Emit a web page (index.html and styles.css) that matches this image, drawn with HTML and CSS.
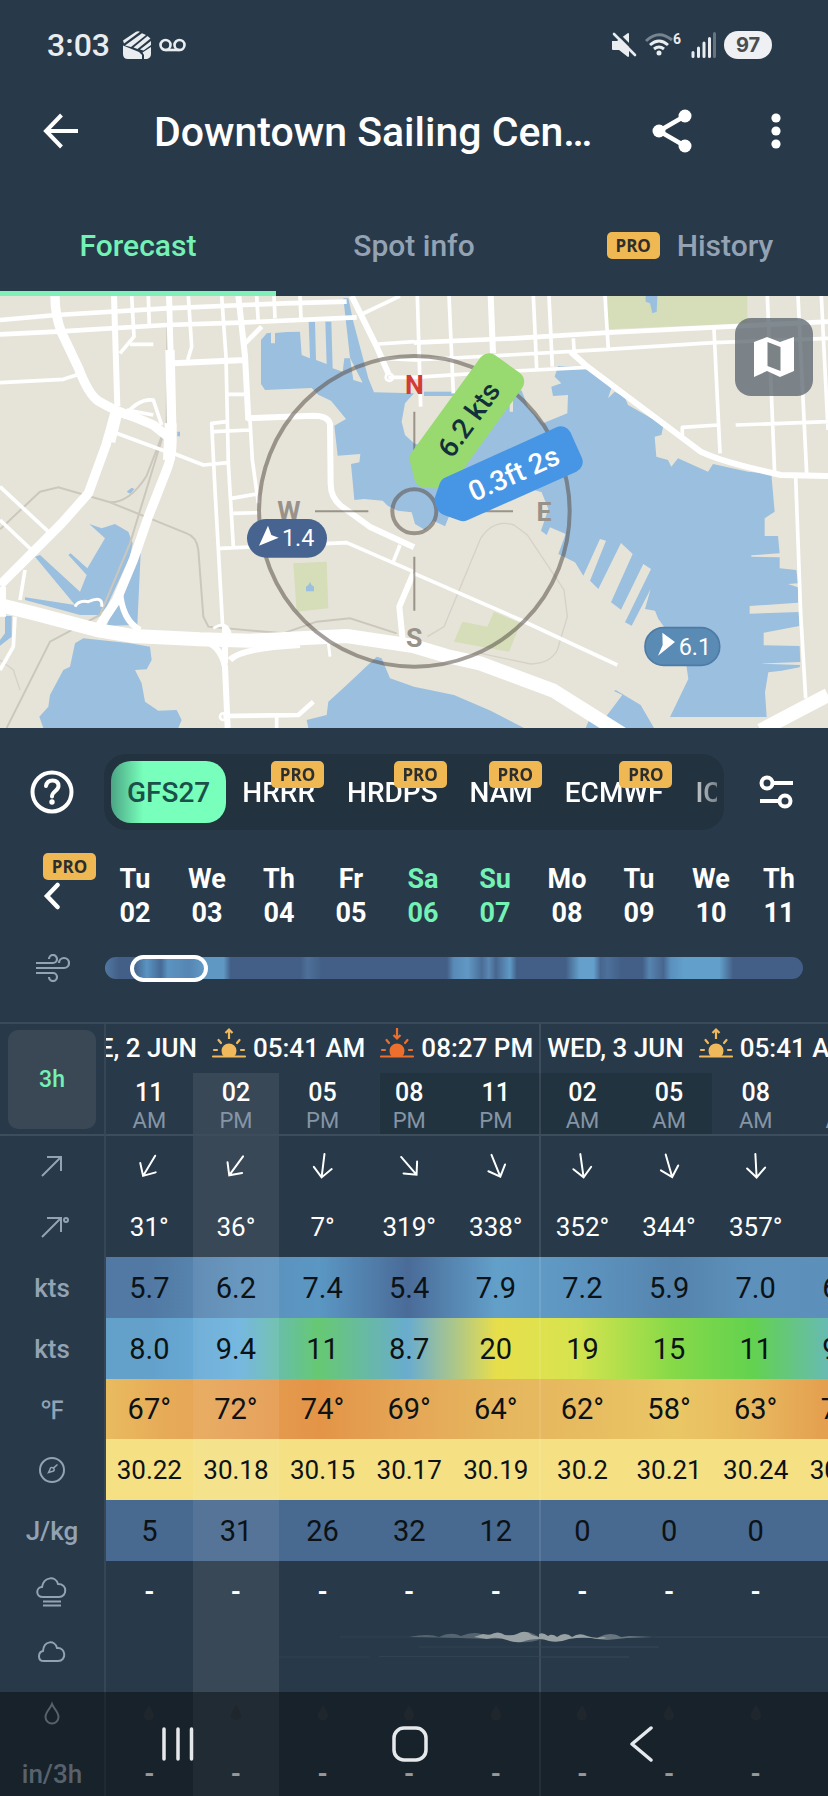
FILE: index.html
```html
<!DOCTYPE html>
<html lang="en">
  <head>
    <meta charset="utf-8">
    <meta name="viewport" content="width=device-width, initial-scale=1">
    <title>Downtown Sailing Center</title>
    <link rel="stylesheet" href="styles.css">
  </head>
  <body>
    <!-- shared icons -->
    <svg class="sprite" aria-hidden="true">
      <symbol id="arrow" viewBox="0 0 28 28">
        <path d="M14 2v23M5 16l9 9.500 9-9.500" fill="none" stroke="currentColor" stroke-width="2" stroke-linecap="round"/>
      </symbol>
      <symbol id="drop" viewBox="0 0 12 16">
        <path d="M6 0C4 4 1 7 1 10.500a5 5 0 0 0 10 0C11 7 8 4 6 0z" fill="currentColor"/>
      </symbol>
      <symbol id="sun" viewBox="0 0 36 34">
        <g fill="none" stroke="currentColor" stroke-width="2.200" stroke-linecap="round">
          <path d="M2 29.500h32M3 23h3M30 23h3M7.500 13l2.500 3M28.500 13l-2.500 3"/>
        </g>
        <path d="M12.500 29a7.500 7.500 0 1 1 11 0z" fill="currentColor"/>
      </symbol>
    </svg>

    <div class="app">
      <header>
        <div class="status">
          <span class="time">3:03</span>
          <svg width="28" height="28" viewBox="0 0 28 28" fill="#e9edf0">
            <path d="M0 9.500L13 .8q2-1 4 0L1 12.500zM2 14.500L19 2.200l4 1.800L8 16zM10.500 16.500L24.500 5l3 2.500L14.500 18zM17 18.500L28 10v4l-7.500 5.500zM0 14.500l16 6.500 3 3v4H5q-5 0-5-5zM19.500 21.500L28 16v7q0 4-4 5h-3v-4z"/>
          </svg>
          <svg width="27" height="14" viewBox="0 0 27 14" fill="none" stroke="#e9edf0" stroke-width="2.600">
            <circle cx="6.500" cy="7" r="5"/><circle cx="20.500" cy="7" r="5"/><path d="M6.500 12h14"/>
          </svg>
          <span class="space"></span>
          <svg width="26" height="26" viewBox="0 0 26 26">
            <path d="M1 9h5l11-8q1 0 1 1v22q0 1-1 1l-9-7H2q-1 0-1-1z" fill="#e9edf0"/>
            <path d="M4 -1l22 22" stroke="#283949" stroke-width="3"/>
            <path d="M3 2l21 21" stroke="#e9edf0" stroke-width="2.600" stroke-linecap="round"/>
          </svg>
          <svg class="wifi" width="38" height="26" viewBox="0 0 38 26" fill="none" stroke="#e9edf0" stroke-width="3">
            <path d="M1 9Q13.500-3 27 8" stroke="#768490"/>
            <path d="M5 13q9-8 18 0M9 17q5-4 10 0"/>
            <circle cx="14" cy="21" r="2.500" fill="#e9edf0" stroke="none"/>
            <text x="28" y="12" font-size="14" font-weight="700" fill="#e9edf0" stroke="none">6</text>
          </svg>
          <svg width="25" height="28" viewBox="0 0 25 28" stroke-width="3" stroke-linecap="round" stroke="#e9edf0">
            <path d="M2 21.500v4M7.500 17v8.500M13 12v13.500M18.500 7.500v18"/>
            <path d="M23.500 2.500v23" stroke="#66747f"/>
          </svg>
          <span class="battery">97</span>
        </div>
        <div class="appbar">
          <button class="back" aria-label="Back">
            <svg width="36" height="36" viewBox="0 0 36 36" fill="none" stroke="#fff" stroke-width="4"><path d="M18.500 2L3 18l15.500 16M3 18h32"/></svg>
          </button>
          <h1>Downtown Sailing Cen…</h1>
          <button aria-label="Share">
            <svg width="40" height="44" viewBox="0 0 40 44"><path d="M33 7L7 22l26 15" fill="none" stroke="#fff" stroke-width="4.500"/><g fill="#fff"><circle cx="33" cy="7" r="6.500"/><circle cx="7" cy="22" r="6.500"/><circle cx="33" cy="37" r="6.500"/></g></svg>
          </button>
          <button aria-label="More">
            <svg width="10" height="36" viewBox="0 0 10 36" fill="#fff"><circle cx="5" cy="5" r="4.600"/><circle cx="5" cy="18" r="4.600"/><circle cx="5" cy="31" r="4.600"/></svg>
          </button>
        </div>
        <nav class="tabs">
          <a class="active" href="#forecast">Forecast</a>
          <a href="#info">Spot info</a>
          <a href="#history"><span class="pro">PRO</span> History</a>
        </nav>
      </header>

      <section class="map">
        <svg class="canvas" viewBox="0 18 2484 1296">
          <rect y="18" width="2484" height="1296" fill="#e6e4d9"/>
          <g fill="#d5ddb9">
            <path d="M880 820l100-5 5 140-95 10zM1822 18h420v82l-420 18zM1387 995l75 15 20-45 80 35-35 85-165-30z"/>
          </g>
          <g fill="#9bbfdf">
            <!-- harbor -->
            <path d="M783 150l17-20 13-2v32h12v-31l35-3 40-1 5 70 25 10-4-110h19l3 115 32 12-4-127h18l4 140 30 10 5-40h17l10 65 28 8-38-75-20-178h15l15 70 45 170 17 42 120 3-27 30-10 55 10 40 27 25 60 20 180-170h15l3 55h10l2-68h17v68h10v-50l25-15 20 50 45 50 73-30 2-55-45 3-5-28 30-10-20-20 10-32 90 4 70 63-10 30 20-20 30 15 10 25 70 40 15-10 23 25-8 35-20 5 5 60 35 10 10 20 20-25 90 40 15-23 105 23 70 7 10 113-30 20v53h40l5 52-85 6v4l85 2v33l50 5 5 40-30 2 30 10v46l-145 10v23l147-5 2 42-107 20v38l108 2 2 48-120 5 119 4-1 7-54 10-40 5-10 60 5 74h-290l55-114-10-70-80-110-10-25-30-5 17-60-57 110-20-10 78-160-23-15-67 137-30-22 65-145-35-33-68 138-25-25 48-120-18-5-50 110-25-40-50-25 22-60-47-20-10 23-17-13 22-65-20-50-50-15-10-15-150 70-65 25-15 37-35-17-25 28-30-18-10-35-42-5-30-15-15-15-55-5-30 3-10-108 25-5 3-25-68 5-10-90 35-20-45-55-38-18-20-20-140 6-12-18z"/>
            <path d="M1272 305h90v13h-90z"/>
            <path d="M268 702l37 13 40-13 40 23 13 35-8 40-70 150-20 25h-60L75 930v-8l150 23L105 800l15-5 120 110 20-50-55-60 7-5 50 45 53-90z"/>
            <path d="M422 790l-10 215-92 2 60-160zM0 1050l15-20V978h20v62L0 1067z"/>
            <path d="M225 1060l25-15 140 15 60 10 5 40-15 28-35 2 20 40 10 55 40 27 55-2 15 30-10 24H130l-12-34 27-30 5-35 40-75 20-10z"/>
            <path d="M1130 1100l15 5 25 60 72 25 120 25 110 47 100 52H925l-5-24 60-15 5-40 55-50z"/>
            <path d="M1847 1200l75 45 40 69h-205l10-24 45-2 55-73-25-12zM1937 18h35l-2 47-13 5-7-30-13-5z"/>
            <path d="M918 890l8-6 4-8 4 8 8 6v14h-24zM380 605l15-12 8 4-12 14zM532 425h8v14h-8z"/>
          </g>
          <g fill="none" stroke="#cbc7bd" stroke-width="6">
            <path d="M503 18l-3 382-110 360-90 215-150 80L20 1314M0 718l120-113 55-13 155 45q60 0 110-80l50-130M330 637l230 93q30 10 35 50l15 200 15 30 225 20 100-35 100-10 140 45"/>
            <path stroke-width="4" stroke="#d5d1c6" d="M1282 1040l50-30 110-265q40-60 100-40l40 30 110 165 10 80-30 100q-20 40-80 42l-150-32M0 1110l40 30 20 60"/>
          </g>
          <g fill="none" stroke="#fff" stroke-linejoin="round">
            <path stroke-width="42" d="M0 945l100 25 200 52 100 16 200 10 150 4 290-14 200 30 100 30 100 22 220 82 210 132M2484 1215l-202 106"/>
            <path stroke-width="28" d="M165 18q0 60 20 110l50 105q30 80 60 100 50 30 105 47l60 25 50 40M510 180l6 270q0 50-16 90l-55 140-45 130-50 120-50 75M345 370l-27 95-53 145-80 90L0 885"/>
            <path stroke-width="36" d="M350 365l-22 90M512 400l-5 110M0 890v90"/>
            <path stroke-width="18" d="M507 18l5 180M715 18l20 180 10 192M520 220l215-10M740 385l200-8q45 0 50 25l2 180q0 40 30 65l90 65 130 60M1240 850l-42 100 10 100M1472 18l7 172M1712 185l50 45 340 255q60 30 240 70l142 3M1055 18l75 152 35 80M342 18l10 330M600 1050q60 10 75 80l8 184M675 1010v110M690 1110q30-35 210-45M360 900q5 90 60 120"/>
            <path stroke-width="14" d="M0 90l170-15 330-20 350-15 190-5M0 133l170-8 330-20 220-7 350-16M735 160l50-50M1242 158l300-13 280-17 662-33M670 1278l225-3 45-40M330 970l70-150"/>
            <path stroke-width="11" d="M395 18l7 122-42 50M390 163h70M445 18l3 92M565 18l10 152-12 40M665 18l13 182 7 320 15 250M770 18l5 82M822 18l3 67M900 18l3 67M750 390l7 120 18 130M680 313h55M680 395l-45 5 10 200 23 410M640 425l110-5M520 490l90 35 75-7M350 430l150 55M695 625l75-13M700 670l75-2M660 775l380-17 200 87M1180 815l20-50M0 278l190-10 40-13M0 590l145 135M0 690l95 90M75 840l-15 90M45 980l-5 90-40 70M830 1280v34M1080 75l120-57M1135 162l107-7M1150 205l92 5 230-12 350-20 320-20 342-13M1165 262h77l300-19 220-11M1252 18l10 332M1347 18l13 292M1600 18l10 217M1647 18l10 212M1815 18l10 160M1720 145l2 35M2302 18l22 532M2394 18l26 532M2464 18l20 402M2142 118l18 372M2154 405l-107 7v26M2207 405l277-10M2387 560l15 410 15 255M1242 850l320 140 290 135M370 385q40-60 90-55l25 75M380 360l80 15"/>
            <path stroke-width="9" d="M225 950q10-20 40-15 45-20 40 15M985 1060l5 40M640 1015q40-25 50 15"/>
          </g>
          <g fill="none" stroke="#fff" stroke-width="8"><circle cx="1168" cy="262" r="11"/><circle cx="670" cy="1280" r="10"/></g>

          <!-- compass -->
          <g fill="none" stroke="#5a5048" stroke-opacity=".55" stroke-width="12">
            <circle cx="1243" cy="664" r="466"/>
            <circle cx="1243" cy="664" r="66"/>
            <path stroke-width="6" d="M945 664h160M1381 664h158M1243 365v125M1243 800v162"/>
          </g>
          <g class="cardinal" text-anchor="middle">
            <text class="north" x="1243" y="313">N</text>
            <text x="867" y="689">W</text>
            <text x="1632" y="692">E</text>
            <text x="1243" y="1071">S</text>
          </g>
          <g transform="translate(1243 663) rotate(-54)">
            <path d="M138-77L488-77V12H132L102-34z" fill="#98da70" stroke="#98da70" stroke-width="66" stroke-linejoin="round"/>
            <text class="chip" x="318" y="0" fill="#12303a">6.2 kts</text>
          </g>
          <g transform="translate(1243 663) rotate(-24)">
            <path d="M126-22L492-24V58H134L98 24V8z" fill="#4796e5" stroke="#4796e5" stroke-width="64" stroke-linejoin="round"/>
            <text class="chip" x="318" y="48" fill="#fff">0.3ft 2s</text>
          </g>
          <g class="spot">
            <rect x="741" y="687" width="240" height="116" rx="58" fill="#46648f"/>
            <path d="M777 767l27-60 10 28 22 8z"/>
            <text x="846" y="769">1.4</text>
            <rect x="1935" y="1013" width="224" height="113" rx="56" fill="#5a8bb5" stroke="#4d7ba6" stroke-width="5"/>
            <path d="M1987 1028l38 28-51 41 14-32z"/>
            <text x="2036" y="1094">6.1</text>
          </g>
        </svg>
        <button class="layers" aria-label="Map layers">
          <svg width="40" height="40" viewBox="0 0 40 40"><path d="M0 5l13-5 13 5 14-5v34l-14 6-13-6-13 6z" fill="#fff"/><path d="M13.500 5l13 5v24l-13-5z" fill="#7b8387"/></svg>
        </button>
      </section>

      <section class="models">
        <button aria-label="Help">
          <svg width="44" height="44" viewBox="0 0 44 44" fill="none" stroke="#fff" stroke-width="4"><circle cx="22" cy="22" r="19.500"/><path d="M16 16q1-5.500 6.500-5.500 6 0 6 5.500c0 5-6.500 5-6.500 10.500" stroke-linecap="round"/><circle cx="22" cy="32" r="2.700" fill="#fff" stroke="none"/></svg>
        </button>
        <div class="model-bar">
          <div class="model-list">
            <button class="selected">GFS27</button>
            <button>HRRR<span class="pro">PRO</span></button>
            <button>HRDPS<span class="pro">PRO</span></button>
            <button>NAM<span class="pro">PRO</span></button>
            <button>ECMWF<span class="pro">PRO</span></button>
            <button>ICON</button>
          </div>
        </div>
        <button aria-label="Settings">
          <svg width="34" height="34" viewBox="0 0 34 34" fill="none" stroke="#fff" stroke-width="4"><circle cx="8" cy="8" r="5.500"/><path d="M14 8h20M1 26h18"/><circle cx="26" cy="26" r="5.500"/></svg>
        </button>
      </section>

      <section class="days">
        <button class="prev" aria-label="Previous days">
          <span class="pro">PRO</span>
          <svg width="18" height="28" viewBox="0 0 18 28" fill="none" stroke="#fff" stroke-width="4.500" stroke-linecap="round"><path d="M14.500 3L4 14l10.500 11"/></svg>
        </button>
        <ol>
          <li>Tu<br>02</li>
          <li>We<br>03</li>
          <li>Th<br>04</li>
          <li>Fr<br>05</li>
          <li class="weekend">Sa<br>06</li>
          <li class="weekend">Su<br>07</li>
          <li>Mo<br>08</li>
          <li>Tu<br>09</li>
          <li>We<br>10</li>
          <li>Th<br>11</li>
        </ol>
      </section>

      <section class="timeline">
        <svg width="34" height="28" viewBox="0 0 34 28" fill="none" stroke="#93a3b4" stroke-width="2.200"><path d="M0 9h17a4 4 0 1 0-4-4M0 14h28a5 5 0 1 0-5-5M0 19h17a4 4 0 1 1-4 4"/></svg>
        <input type="range" min="0" max="100" value="4" aria-label="Visible time">
      </section>

      <div class="forecast">
        <table>
          <thead>
            <tr class="dates">
              <th class="label" rowspan="2"><button class="step">3h</button></th>
              <th colspan="5">
                <div class="date end">
                  <span>TUE, 2 JUN</span>
                  <svg class="rise" width="36" height="34"><use href="#sun"/><path d="M18 12V3M14.500 6L18 2.500 21.500 6" fill="none" stroke="currentColor" stroke-width="2.200"/></svg>
                  <span>05:41 AM</span>
                  <svg class="set" width="36" height="34"><use href="#sun"/><path d="M18 1v10M14.500 8l3.500 3.500L21.500 8" fill="none" stroke="currentColor" stroke-width="2.200"/></svg>
                  <span>08:27 PM</span>
                </div>
              </th>
              <th class="day" colspan="4">
                <div class="date">
                  <span>WED, 3 JUN</span>
                  <svg class="rise" width="36" height="34"><use href="#sun"/><path d="M18 12V3M14.500 6L18 2.500 21.500 6" fill="none" stroke="currentColor" stroke-width="2.200"/></svg>
                  <span>05:41 AM</span>
                </div>
              </th>
            </tr>
            <tr class="hours">
              <th>11<small>AM</small></th>
              <th class="now">02<small>PM</small></th>
              <th>05<small>PM</small></th>
              <th class="dusk">08<small>PM</small></th>
              <th class="night">11<small>PM</small></th>
              <th class="night day">02<small>AM</small></th>
              <th class="night">05<small>AM</small></th>
              <th>08<small>AM</small></th>
              <th>11<small>AM</small></th>
            </tr>
          </thead>
          <tbody>
            <tr>
              <th class="label" aria-label="Wind direction"><svg width="22" height="22" viewBox="0 0 22 22" fill="none" stroke="currentColor" stroke-width="2"><path d="M1 21L20 2M6 2h14v14"/></svg></th>
              <td><svg class="dir" style="transform: rotate(31deg)"><use href="#arrow"/></svg></td>
              <td class="now"><svg class="dir" style="transform: rotate(36deg)"><use href="#arrow"/></svg></td>
              <td><svg class="dir" style="transform: rotate(7deg)"><use href="#arrow"/></svg></td>
              <td><svg class="dir" style="transform: rotate(319deg)"><use href="#arrow"/></svg></td>
              <td><svg class="dir" style="transform: rotate(338deg)"><use href="#arrow"/></svg></td>
              <td class="day"><svg class="dir" style="transform: rotate(352deg)"><use href="#arrow"/></svg></td>
              <td><svg class="dir" style="transform: rotate(344deg)"><use href="#arrow"/></svg></td>
              <td><svg class="dir" style="transform: rotate(357deg)"><use href="#arrow"/></svg></td>
              <td></td>
            </tr>
            <tr class="degrees">
              <th class="label" aria-label="Wind direction in degrees"><svg width="34" height="22" viewBox="-6 0 34 22" fill="none" stroke="currentColor" stroke-width="2"><path d="M1 21L20 2M6 2h14v14"/><circle cx="25" cy="4" r="2"/></svg></th>
              <td>31°</td>
              <td class="now">36°</td>
              <td>7°</td>
              <td>319°</td>
              <td>338°</td>
              <td class="day">352°</td>
              <td>344°</td>
              <td>357°</td>
              <td></td>
            </tr>
            <tr class="heat wind">
              <th class="label">kts</th>
              <td>5.7</td>
              <td class="now">6.2</td>
              <td>7.4</td>
              <td>5.4</td>
              <td>7.9</td>
              <td class="day">7.2</td>
              <td>5.9</td>
              <td>7.0</td>
              <td>6.5</td>
            </tr>
            <tr class="heat gusts">
              <th class="label">kts</th>
              <td>8.0</td>
              <td class="now">9.4</td>
              <td>11</td>
              <td>8.7</td>
              <td>20</td>
              <td class="day">19</td>
              <td>15</td>
              <td>11</td>
              <td>9.3</td>
            </tr>
            <tr class="heat temp">
              <th class="label">℉</th>
              <td>67°</td>
              <td class="now">72°</td>
              <td>74°</td>
              <td>69°</td>
              <td>64°</td>
              <td class="day">62°</td>
              <td>58°</td>
              <td>63°</td>
              <td>70°</td>
            </tr>
            <tr class="heat pressure">
              <th class="label" aria-label="Pressure"><svg width="28" height="28" viewBox="0 0 28 28" fill="none" stroke="currentColor" stroke-width="2"><circle cx="14" cy="14" r="12"/><path d="M19.500 8.500l-4 3.500q2 3-1.500 3.500l-3.500 1 1.500-3q0-3 3.500-1.500z" stroke-width="1.500"/></svg></th>
              <td>30.22</td>
              <td class="now">30.18</td>
              <td>30.15</td>
              <td>30.17</td>
              <td>30.19</td>
              <td class="day">30.2</td>
              <td>30.21</td>
              <td>30.24</td>
              <td>30.25</td>
            </tr>
            <tr class="heat cape">
              <th class="label">J/kg</th>
              <td>5</td>
              <td class="now">31</td>
              <td>26</td>
              <td>32</td>
              <td>12</td>
              <td class="day">0</td>
              <td>0</td>
              <td>0</td>
              <td></td>
            </tr>
            <tr class="plain">
              <th class="label" aria-label="Fog"><svg width="32" height="30" viewBox="0 0 32 30" fill="none" stroke="currentColor" stroke-width="2"><path d="M7 20C-1 20 0 10 6 10 8-1 20-1 22 7c10 0 9 13 1 13zM7 24.500h18M7 28.500h18"/></svg></th>
              <td>-</td>
              <td class="now">-</td>
              <td>-</td>
              <td>-</td>
              <td>-</td>
              <td class="day">-</td>
              <td>-</td>
              <td>-</td>
              <td></td>
            </tr>
            <tr class="clouds">
              <th class="label" aria-label="Clouds"><svg width="28" height="22" viewBox="0 0 28 22" fill="none" stroke="currentColor" stroke-width="2"><path d="M6 20C-1 20 0 11 5 10 6-1 17-1 19 7c9-1 10 13 1 13z"/></svg></th>
              <td></td>
              <td class="now"></td>
              <td colspan="3">
                <svg class="wave" viewBox="0 0 260 60" preserveAspectRatio="none">
                  <path d="M61 15h80M0 35h90M100 34.500h160M140 25h120" stroke="#304353" fill="none"/>
                  <path d="M130 15q20-4 30 0 12-6 22-1 16-6 24 0 10-5 20 1l10-1q13-8 24 1v3q-14 4-24 1-14-3-26-2l-30-1z" fill="#8d999f" opacity=".45"/>
                  <path d="M195 15l9-3 7 1q8-5 15 0 8 1 12-1 9-5 15 1l7 2v2q-10 0-17 3-8 1-15-2-10-4-20-1z" fill="#98a2a5"/>
                </svg>
              </td>
              <td class="day" colspan="4">
                <svg class="wave" viewBox="0 0 346 60" preserveAspectRatio="none">
                  <path d="M115 15h231M0 25h120M0 35h90" stroke="#34495b" fill="none"/>
                  <path d="M60 15q12-6 22 0l8-1 26 1-28 1-20 2-10-1z" fill="#68767f"/>
                  <path d="M0 12q4-2 9 2 4-3 9 1 8-6 15 0 7-5 15-1 8 3 16 1l4 1q-8 2-16 0-11-1-22 1-10 4-20 2-5-2-10-2z" fill="#98a2a5"/>
                </svg>
              </td>
            </tr>
            <tr class="drops">
              <th class="label" aria-label="Rain"><svg width="16" height="24" viewBox="0 0 16 24" fill="none" stroke="currentColor" stroke-width="2"><path d="M8 3C6 8 1.500 11 1.500 16a6.500 6.500 0 0 0 13 0C14.500 11 10 8 8 3z"/></svg></th>
              <td><svg><use href="#drop"/></svg></td>
              <td class="now"><svg><use href="#drop"/></svg></td>
              <td><svg><use href="#drop"/></svg></td>
              <td><svg><use href="#drop"/></svg></td>
              <td><svg><use href="#drop"/></svg></td>
              <td class="day"><svg><use href="#drop"/></svg></td>
              <td><svg><use href="#drop"/></svg></td>
              <td><svg><use href="#drop"/></svg></td>
              <td></td>
            </tr>
            <tr class="plain">
              <th class="label">in/3h</th>
              <td>-</td>
              <td class="now">-</td>
              <td>-</td>
              <td>-</td>
              <td>-</td>
              <td class="day">-</td>
              <td>-</td>
              <td>-</td>
              <td></td>
            </tr>
          </tbody>
        </table>
      </div>

      <nav class="system">
        <button aria-label="Recent apps"><svg width="34" height="36" viewBox="0 0 34 36" stroke="#e6e9ec" stroke-width="3.500" stroke-linecap="round"><path d="M3 3v30M17 3v30M30.500 3v30"/></svg></button>
        <button aria-label="Home"><svg width="36" height="36" viewBox="0 0 36 36" fill="none" stroke="#e6e9ec" stroke-width="3.500"><rect x="2" y="2" width="32" height="32" rx="10"/></svg></button>
        <button aria-label="Back"><svg width="26" height="36" viewBox="0 0 26 36" fill="none" stroke="#e6e9ec" stroke-width="3.500" stroke-linecap="round" stroke-linejoin="round"><path d="M23 2L4 18l19 16"/></svg></button>
      </nav>
    </div>
  </body>
</html>
```

FILE: styles.css
```css
* {
  box-sizing: border-box;
}

body {
  margin: 0;
  background: #283949;
  color: #fff;
  font-family: Roboto, "Noto Sans", sans-serif;
}

button {
  display: flex;
  align-items: center;
  justify-content: center;
  padding: 0;
  border: 0;
  background: none;
  color: inherit;
  font: inherit;
  cursor: pointer;
}

svg {
  flex: none;
}

.sprite {
  display: none;
}

.app {
  display: flex;
  flex-direction: column;
  height: 100vh;
  overflow: hidden;
}

.app > * {
  flex: none;
}

.pro {
  display: inline-block;
  width: 53px;
  border-radius: 5px;
  background: #f0b852;
  color: #2c2f2e;
  font: 700 17px/27px "Open Sans", sans-serif;
  text-align: center;
}

/* status bar */
.status {
  display: flex;
  align-items: center;
  gap: 8px;
  height: 66px;
  padding: 24px 56px 0 47px;
}

.time {
  margin-right: 5px;
  color: #e9edf0;
  font-size: 32px;
  font-weight: 500;
}

.space {
  flex: 1;
}

.battery {
  width: 48px;
  border-radius: 14px;
  background: #eef0f3;
  color: #4a4d50;
  font: 700 20px/28px Inter, sans-serif;
  text-align: center;
}

.appbar {
  display: flex;
  height: 130px;
}

.appbar button {
  width: 104px;
}

.appbar .back {
  width: 122px;
}

h1 {
  flex: 1;
  margin: 0;
  padding-left: 32px;
  overflow: hidden;
  font-size: 41px;
  font-weight: 500;
  line-height: 132px;
  white-space: nowrap;
}

.tabs {
  display: grid;
  grid-template-columns: repeat(3, 1fr);
}

.tabs a {
  display: flex;
  align-items: center;
  justify-content: center;
  gap: 17px;
  height: 100px;
  border-top: 4px solid transparent;
  border-bottom: 5px solid transparent;
  color: #93a3b4;
  font-size: 30px;
  font-weight: 500;
  text-decoration: none;
}

.tabs .active {
  border-bottom-color: #7ff0b8;
  color: #74f2b5;
}

/* map */
.map {
  position: relative;
}

.canvas {
  display: block;
  width: 100%;
  height: auto;
}

.cardinal text {
  fill: #98928a;
  font-size: 80px;
  font-weight: 700;
}

.cardinal .north {
  fill: #d23b36;
}

.chip {
  font-size: 84px;
  font-weight: 500;
  text-anchor: middle;
}

.spot path,
.spot text {
  fill: #fff;
  font-size: 70px;
}

.layers {
  position: absolute;
  top: 22px;
  right: 15px;
  width: 78px;
  height: 78px;
  border-radius: 16px;
  background: rgba(88, 99, 108, 0.75);
}

/* model picker */
.models {
  display: grid;
  grid-template-columns: 104px minmax(0, 1fr) 104px;
  padding-top: 26px;
}

.model-bar {
  padding: 7px;
  border-radius: 22px;
  background: #22323f;
}

.model-list {
  display: flex;
  overflow: hidden;
  -webkit-mask-image: linear-gradient(270deg, rgba(0, 0, 0, 0.4), #000 40px);
  mask-image: linear-gradient(270deg, rgba(0, 0, 0, 0.4), #000 40px);
}

.model-list button {
  position: relative;
  flex: none;
  height: 62px;
  padding: 0 16px;
  font-size: 28px;
  font-weight: 500;
}

.model-list .selected {
  border-radius: 20px;
  background: linear-gradient(90deg, #4ba585, #78ffbb 28%);
  color: #1a5049;
}

.model-list .pro {
  position: absolute;
  top: 0;
  right: 7px;
}

/* day picker */
.days {
  display: grid;
  grid-template-columns: 99px 1fr;
  padding: 23px 17px 0 0;
}

.days ol {
  display: grid;
  grid-template-columns: repeat(9, 9fr) 8fr;
  margin: 0;
  padding: 9px 0 0;
  list-style: none;
  font-size: 27px;
  font-weight: 700;
  line-height: 34px;
  text-align: center;
}

.weekend {
  color: #74f2b5;
}

.prev {
  flex-direction: column;
  align-items: flex-end;
  justify-content: flex-start;
  gap: 2px;
  padding-right: 3px;
}

.prev svg {
  margin-right: 35px;
}

.timeline {
  display: grid;
  grid-template-columns: 105px 1fr;
  align-items: center;
  justify-items: center;
  height: 92px;
  padding: 0 25px 16px 0;
}

.timeline input {
  width: 100%;
  height: 22px;
  margin: 0;
  border-radius: 11px;
  -webkit-appearance: none;
  appearance: none;
  background: linear-gradient(90deg, #5079a2, #435f87 2%, #435f87 4%, #5a94c2 6%, #476a96 8%, #5b93c0 9%, #5686b3 12%, #6098c4 14%, #6098c4 17%, #435f87 18%, #435f87 28%, #4d7099 29%, #435f87 31%, #435f87 49%, #5a8bb8 50%, #6098c4 52%, #4a6d97 54%, #5a87b3 55%, #47668f 56%, #5f9ac6 58%, #435f87 59%, #435f87 66%, #64a0cb 68%, #64a0cb 70%, #47668f 71%, #4c709a 72%, #435f87 74%, #435f87 77%, #5684b0 78%, #47668f 80%, #5a8fbc 81%, #62a0cb 83%, #62a0cb 88%, #435f87 90%);
}

.timeline input::-webkit-slider-thumb {
  width: 78px;
  height: 27px;
  border: 4px solid #fff;
  border-radius: 14px;
  -webkit-appearance: none;
  background: none;
}

/* forecast table */
.forecast {
  overflow: hidden;
  border-top: 2px solid #394a59;
}

table {
  width: calc(106px + (100% - 106px) * 1.08);
  table-layout: fixed;
  border-spacing: 0;
}

th,
td {
  padding: 0;
  text-align: center;
}

.label {
  width: 106px;
  border-right: 2px solid #364654;
  background: #283949;
  color: #93a3b4;
  font-size: 26px;
  font-weight: 500;
}

.label svg {
  display: block;
  margin: 0 auto;
}

.step {
  width: 88px;
  height: 99px;
  margin: 0 auto;
  border-radius: 10px;
  background: #3a4855;
  color: #74f2b5;
  font-size: 23px;
}

.dates {
  height: 49px;
}

.dates th {
  vertical-align: top;
}

.date {
  display: flex;
  align-items: center;
  gap: 6px;
  height: 47px;
  padding: 0 6px 0 8px;
  overflow: hidden;
  font-size: 26px;
  font-weight: 500;
  white-space: nowrap;
}

.date.end {
  justify-content: flex-end;
}

.date svg {
  margin: -8px 0 0 8px;
}

.rise {
  color: #f0b95c;
}

.set {
  color: #ed6f2d;
}

.hours th {
  height: 63px;
  border-bottom: 2px solid #3d4d5b;
  font-size: 25px;
  font-weight: 500;
  line-height: 30px;
  vertical-align: bottom;
}

.dates .label {
  border-bottom: 2px solid #3d4d5b;
  vertical-align: middle;
}

.hours small {
  display: block;
  color: #8595a6;
  font-size: 22px;
  font-weight: 400;
  line-height: 26px;
}

.now {
  background: rgba(255, 255, 255, 0.08);
}

.night {
  background: #223340;
}

/* sun sets inside this cell */
.dusk {
  background: linear-gradient(90deg, transparent 16%, #223340 16%);
}

.day {
  box-shadow: inset 2px 0 rgba(255, 255, 255, 0.1);
}

tbody tr {
  height: 61px;
}

tbody tr:nth-child(4n + 1) {
  height: 60px;
}

.dir {
  display: block;
  width: 28px;
  height: 28px;
  margin: 0 auto;
}

.degrees {
  font-size: 26px;
}

.heat {
  color: #0c1216;
  font-size: 29px;
}

.wind {
  background: linear-gradient(90deg, #5179a3 17%, #5c8fba 27%, #5b97c4 36%, #4a6b98 46%, #62a0ca 56%, #5d94bf 66%, #5584ae 76%, #5d91bb 85%, #5c8fba 95%);
}

.gusts {
  background: linear-gradient(90deg, #63a1cb 17%, #6bb2de 27%, #66c972 36%, #69accf 46%, #e8de4b 56%, #d6e44f 65%, #86d948 76%, #63d24f 85%, #68b6c4 95%);
}

.temp {
  background: linear-gradient(90deg, #e9bb5f 12%, #e7ac58 18%, #e5a054 27%, #e39447 36%, #e5a656 46%, #e5b65e 56%, #e7bb60 66%, #eac765 76%, #e8b85e 85%, #e39a4c 95%);
}

.pressure {
  background: #f5e083;
  font-size: 26px;
}

.cape {
  background: #486990;
}

.plain td {
  font-size: 26px;
  font-weight: 700;
}

.clouds td {
  vertical-align: top;
}

.wave {
  display: block;
  width: 100%;
  height: 60px;
}

.drops td {
  color: #35414c;
}

.drops td svg {
  display: block;
  width: 12px;
  height: 16px;
  margin: 0 auto;
}

/* phone navigation */
.system {
  position: fixed;
  right: 0;
  bottom: 0;
  left: 0;
  display: flex;
  height: 104px;
  padding: 0 71px 0 62px;
  background: rgba(0, 0, 0, 0.4);
}

.system button {
  flex: 1;
}
```
